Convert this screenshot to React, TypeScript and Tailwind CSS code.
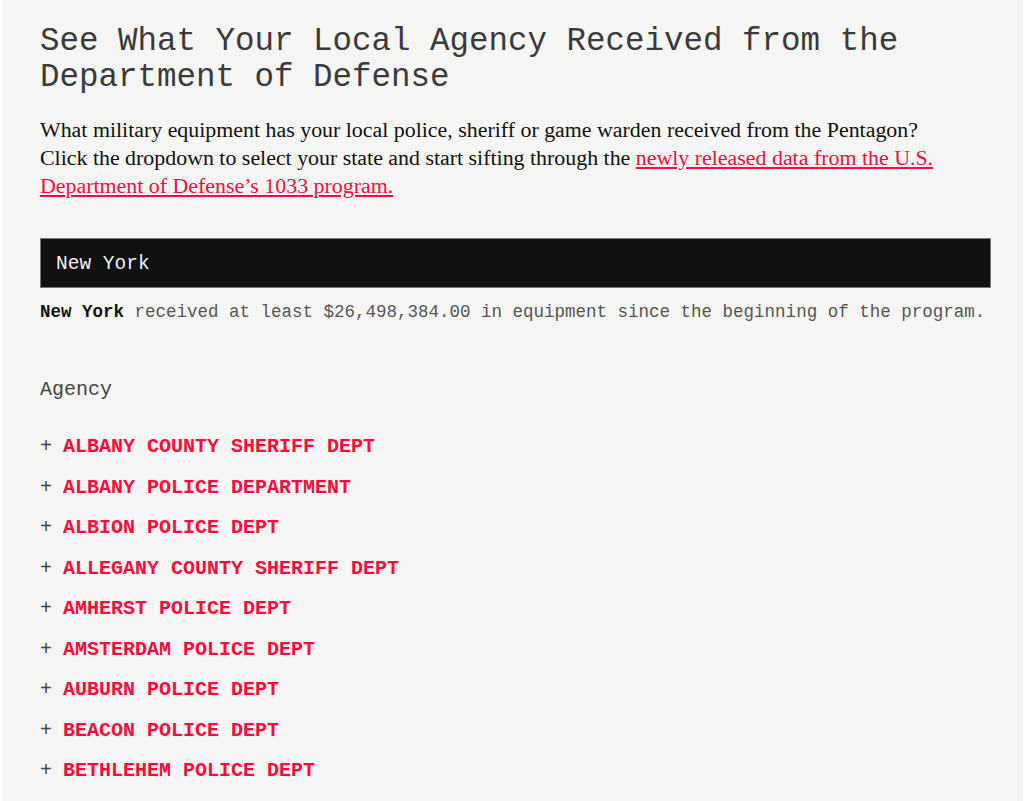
import React from 'react';

const agencies = [
  'ALBANY COUNTY SHERIFF DEPT',
  'ALBANY POLICE DEPARTMENT',
  'ALBION POLICE DEPT',
  'ALLEGANY COUNTY SHERIFF DEPT',
  'AMHERST POLICE DEPT',
  'AMSTERDAM POLICE DEPT',
  'AUBURN POLICE DEPT',
  'BEACON POLICE DEPT',
  'BETHLEHEM POLICE DEPT',
];

const mono = "font-['Liberation_Mono','Courier_New',monospace]";

export default function App() {
  return (
    <div className="min-h-screen bg-white">
      <div className="mx-[2px] min-h-[801px] bg-[#f5f5f3] pl-[38px] pr-[30px] pt-[24px] pb-10">
        <h1 className={`${mono} text-[32.5px] leading-[36px] text-[#3a3a3a]`}>
          See What Your Local Agency Received from the
          <br />
          Department of Defense
        </h1>

        <p className="mt-[20px] w-[951px] font-['Liberation_Serif','Times_New_Roman',serif] text-[21.9px] leading-[28px] text-[#111]">
          What military equipment has your local police, sheriff or game warden received from the Pentagon?
          <br />
          Click the dropdown to select your state and start sifting through the{' '}
          <a href="#" className="text-[#ff0a3c] underline">
            newly released data from the U.S. Department of Defense’s 1033 program.
          </a>
        </p>

        {/* state dropdown */}
        <div className="mt-[38px] w-[951px] h-[50px] bg-[#111] border border-[#777] flex items-center px-[15px] pt-[3px]">
          <span className={`${mono} text-[19.5px] text-[#f0f0f0]`}>New York</span>
        </div>

        <p className={`${mono} mt-[10px] text-[17.5px] leading-[28px] text-[#555]`}>
          <b className="text-[#111]">New York</b> received at least $26,498,384.00 in equipment since the beginning of the program.
        </p>

        <div className={`${mono} mt-[50px] text-[20px] leading-[28px] text-[#444]`}>Agency</div>

        <ul className="mt-[23px]">
          {agencies.map((name) => (
            <li key={name} className={`${mono} text-[20px] leading-[40.5px] flex`}>
              <span className="text-[#444] w-[23px]">+</span>
              <span className="font-bold text-[#ff0a3c]">{name}</span>
            </li>
          ))}
        </ul>
      </div>
    </div>
  );
}
